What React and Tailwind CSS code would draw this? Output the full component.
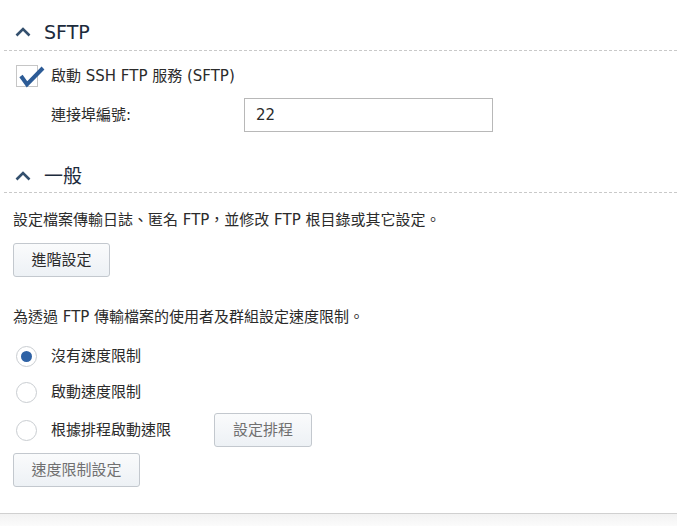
import React from 'react';

const Chevron = () => (
  <svg width="16" height="10" viewBox="0 0 16 10" className="shrink-0">
    <polyline points="1.5,8.5 8,2 14.5,8.5" fill="none" stroke="#34506e" strokeWidth="2.6" />
  </svg>
);

const SectionHeader = ({ title, className }) => (
  <div className={`ml-[4px] pl-[11px] flex items-center gap-[13px] border-b border-dashed border-[#c9c9c9] ${className}`}>
    <Chevron />
    <span className="text-[19px] text-[#1c2b3c] leading-none">{title}</span>
  </div>
);

const Checkbox = () => (
  <span className="relative w-[22px] h-[22px] shrink-0 border border-[#c6c6c6] bg-white">
    <svg width="28" height="24" viewBox="0 0 28 24" className="absolute left-[2px] top-[0px] overflow-visible">
      <polyline points="2,10 8,18.5 24,2" fill="none" stroke="#2c5b96" strokeWidth="4" />
    </svg>
  </span>
);

const Radio = ({ checked }) => (
  <span className="w-[21px] h-[21px] shrink-0 rounded-full border border-[#c9cdd1] bg-white flex items-center justify-center">
    {checked && <span className="w-[11px] h-[11px] rounded-full bg-[#2f62a5]" />}
  </span>
);

const Button = ({ children, disabled, className }) => (
  <button
    className={`h-[34px] rounded-[3px] border border-[#c3c8ce] bg-linear-to-b from-[#fafbfc] to-[#edf1f5] text-[15px] ${disabled ? 'text-[#707070]' : 'text-[#2b2b2b]'} ${className}`}
  >
    {children}
  </button>
);

export default function App() {
  return (
    <div className="w-[677px] h-[526px] bg-white flex flex-col overflow-hidden text-[15px] text-[#2b2b2b] [font-family:'DejaVu_Sans','Noto_Sans_CJK_TC',sans-serif]">
      <SectionHeader title="SFTP" className="mt-[14px] h-[37px]" />

      <div className="mt-[13px] h-[24px] pl-[16px] flex items-center gap-[13px]">
        <Checkbox />
        <span className="leading-none">啟動 SSH FTP 服務 (SFTP)</span>
      </div>

      <div className="mt-[10px] h-[34px] pl-[51px] flex items-center">
        <span className="w-[193px] leading-none">連接埠編號:</span>
        <div className="w-[249px] h-[34px] border border-[#b8b8b8] bg-white flex items-center pl-[11px] leading-none">
          22
        </div>
      </div>

      <SectionHeader title="一般" className="mt-[28px] h-[33px]" />

      <p className="mt-[17px] h-[20px] pl-[13px] leading-[20px]">
        設定檔案傳輸日誌、匿名 FTP，並修改 FTP 根目錄或其它設定。
      </p>

      <div className="mt-[13px] pl-[13px] flex">
        <Button className="w-[97px]">進階設定</Button>
      </div>

      <p className="mt-[30px] h-[20px] pl-[13px] leading-[20px]">
        為透過 FTP 傳輸檔案的使用者及群組設定速度限制。
      </p>

      <div className="mt-[17px] h-[24px] pl-[16px] flex items-center gap-[14px]">
        <Radio checked />
        <span className="leading-none">沒有速度限制</span>
      </div>

      <div className="mt-[12px] h-[24px] pl-[16px] flex items-center gap-[14px]">
        <Radio />
        <span className="leading-none">啟動速度限制</span>
      </div>

      <div className="mt-[9px] h-[34px] pl-[16px] flex items-center">
        <Radio />
        <span className="ml-[14px] w-[163px] leading-none">根據排程啟動速限</span>
        <Button disabled className="w-[98px]">設定排程</Button>
      </div>

      <div className="mt-[6px] pl-[13px] flex">
        <Button disabled className="w-[127px]">速度限制設定</Button>
      </div>

      <div className="mt-[26px] flex-1 border-t border-[#d0d0d0] bg-linear-to-b from-[#f2f2f2] to-[#fbfbfb]" />
    </div>
  );
}
